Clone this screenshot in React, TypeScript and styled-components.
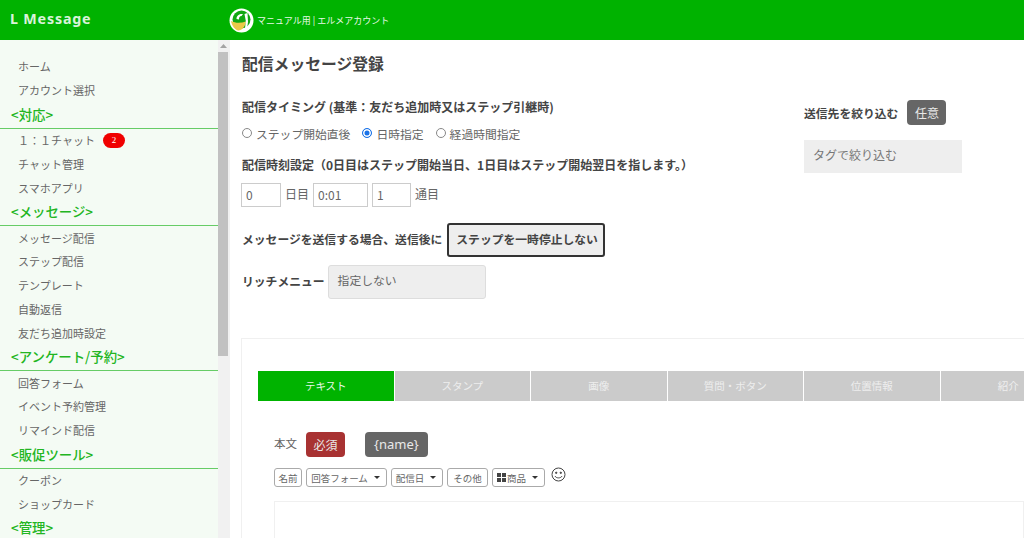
import React from 'react';
import styled, { createGlobalStyle } from 'styled-components';

const GlobalStyle = createGlobalStyle`
  html, body {
    margin: 0;
    height: 100%;
    overflow: hidden;
    background: #fff;
  }
  body, input, button {
    font-family: "Noto Sans CJK JP", "Noto Sans", sans-serif;
    color: #555;
  }
  * {
    box-sizing: border-box;
  }
`;

const Page = styled.div`
  width: 1024px;
  height: 538px;
  display: flex;
  flex-direction: column;
  overflow: hidden;
`;

const Header = styled.header`
  flex: 0 0 40px;
  display: flex;
  align-items: center;
  background: #00b200;
  color: #fff;
`;

const Brand = styled.div`
  width: 229px;
  padding: 0 0 3px 10px;
  font-family: "Noto Sans", sans-serif;
  font-size: 14.3px;
  font-weight: 700;
  letter-spacing: 0.8px;
  opacity: 0.85;
`;

const Account = styled.div`
  display: flex;
  align-items: center;
  gap: 3px;
  font-size: 9px;
  color: #e8f8e8;
`;

const Body = styled.div`
  flex: 1;
  display: flex;
  min-height: 0;
`;

const Sidebar = styled.nav`
  flex: 0 0 218px;
  padding-top: 15px;
  background: #f4fbf4;
  overflow: hidden;
`;

const NavItem = styled.div<{ $indent?: number }>`
  height: 23.75px;
  display: flex;
  align-items: center;
  padding: 0 0 1px ${(p) => p.$indent ?? 18}px;
  font-size: 11px;
  color: #666;
`;

const NavHeading = styled.div`
  height: 26.25px;
  padding: 1px 0 0 11px;
  border-bottom: 1px solid #66cc66;
  font-size: 13.4px;
  line-height: 20px;
  font-weight: 500;
  color: #22b522;
`;

const Badge = styled.span`
  width: 22px;
  height: 15px;
  margin-left: 8px;
  border-radius: 8px;
  background: #f00000;
  color: #fff;
  font-family: "Liberation Serif", serif;
  font-size: 9px;
  line-height: 15px;
  text-align: center;
`;

const Scrollbar = styled.div`
  flex: 0 0 12px;
  display: flex;
  flex-direction: column;
  background: #f1f1f1;
`;

const ScrollArrow = styled.div`
  height: 11px;
  width: 10px;
  display: flex;
  align-items: center;
  justify-content: center;
`;

const ScrollThumb = styled.div`
  width: 10px;
  height: 304px;
  margin-top: 1px;
  background: #c1c1c1;
`;

const Main = styled.main`
  flex: 1;
  min-width: 0;
  padding: 12px 0 0 12px;
  overflow: hidden;
`;

const Title = styled.h1`
  margin: 0 0 22px;
  font-size: 15.8px;
  line-height: 24px;
  font-weight: 700;
  color: #444;
`;

const FormRow = styled.div`
  display: flex;
  height: 215px;
`;

const LeftColumn = styled.div`
  flex: 0 0 562px;
`;

const RightColumn = styled.div`
  flex: 1;
  padding-top: 2px;
`;

const Label = styled.div<{ $lift?: number; $size?: number }>`
  margin-bottom: ${(p) => p.$lift ?? 0}px;
  font-size: ${(p) => p.$size ?? 11.8}px;
  line-height: 18px;
  font-weight: 700;
  color: #444;
  white-space: nowrap;
`;

const RadioRow = styled.div`
  display: flex;
  gap: 12px;
  height: 18px;
  margin: 8px 0 14px;
  font-size: 11.8px;
`;

const RadioLabel = styled.label`
  display: flex;
  align-items: center;
  gap: 4px;
  color: #666;
`;

const RadioDot = styled.span<{ $checked?: boolean }>`
  width: 10px;
  height: 10px;
  border-radius: 50%;
  border: ${(p) => (p.$checked ? '1px solid #1a73e8' : '1px solid #888')};
  background: ${(p) => (p.$checked ? '#1a73e8' : '#fff')};
  box-shadow: ${(p) => (p.$checked ? 'inset 0 0 0 1.5px #fff' : 'none')};
`;

const TimeRow = styled.div`
  display: flex;
  align-items: center;
  gap: 4px;
  margin: 9px 0 0 -1px;
  font-size: 12px;
  color: #666;
`;

const TimeUnit = styled.span`
  margin-bottom: 3px;
`;

const TimeInput = styled.input<{ $width: number }>`
  width: ${(p) => p.$width}px;
  height: 24px;
  padding: 0 4px 2px;
  border: 1px solid #ccc;
  font-size: 12px;
  color: #666;
`;

const StopRow = styled.div`
  display: flex;
  align-items: center;
  gap: 5px;
  margin-top: 16px;
`;

const StopButton = styled.button`
  height: 34px;
  padding: 0 5px 3px 7px;
  border: 2px solid #333;
  border-radius: 3px;
  background: #eee;
  font-size: 11.8px;
  font-weight: 700;
  color: #444;
  white-space: nowrap;
`;

const RichRow = styled.div`
  display: flex;
  align-items: center;
  gap: 3px;
  margin-top: 8px;
`;

const RichSelect = styled.div`
  width: 158px;
  height: 34px;
  padding: 5px 0 0 9px;
  border: 1px solid #ddd;
  border-radius: 3px;
  background: #eee;
  font-size: 11.8px;
  color: #666;
`;

const TagHead = styled.div`
  display: flex;
  align-items: center;
  gap: 9px;
`;

const Pill = styled.span<{ $bg: string; $ml?: number; $latin?: boolean }>`
  display: inline-flex;
  align-items: center;
  justify-content: center;
  height: 25px;
  margin-left: ${(p) => p.$ml ?? 0}px;
  padding: 0 ${(p) => (p.$latin ? 9 : 7.5)}px 1px;
  border-radius: 4px;
  background: ${(p) => p.$bg};
  color: #e8e8e8;
  font-family: ${(p) => (p.$latin ? '"Noto Sans", sans-serif' : 'inherit')};
  font-size: ${(p) => (p.$latin ? 13 : 12)}px;
`;

const TagBox = styled.div`
  width: 158px;
  height: 33px;
  margin-top: 15px;
  padding: 6px 0 0 9px;
  background: #eee;
  font-size: 12px;
  color: #777;
`;

const EditorCard = styled.section`
  height: 220px;
  margin: 25px 0 0 -1px;
  padding: 32px 0 0 16px;
  border: 1px solid #f0f0f0;
  border-right: none;
`;

const Tabs = styled.div`
  display: flex;
  gap: 1px;
`;

const Tab = styled.div<{ $active?: boolean }>`
  flex: 0 0 135.5px;
  height: 30px;
  display: flex;
  align-items: center;
  justify-content: center;
  padding-bottom: 2px;
  font-size: 10.5px;
  background: ${(p) => (p.$active ? '#00b300' : '#cbcbcb')};
  color: ${(p) => (p.$active ? '#e6f8e6' : '#eee')};
`;

const BodyHead = styled.div`
  display: flex;
  align-items: center;
  height: 25px;
  margin: 31px 0 0 16px;
  font-size: 11.5px;
  color: #666;
`;

const BodyLabel = styled.span`
  margin-bottom: 3px;
`;

const Toolbar = styled.div`
  display: flex;
  align-items: flex-start;
  gap: 4px;
  margin: 11px 0 0 16px;
`;

const ToolButton = styled.span<{ $width: number }>`
  display: inline-flex;
  align-items: center;
  justify-content: center;
  gap: 4px;
  width: ${(p) => p.$width}px;
  height: 19px;
  border: 1px solid #aaa;
  border-radius: 3px;
  font-size: 9.5px;
  color: #666;
`;

const Caret = styled.span`
  width: 0;
  height: 0;
  margin: 0 2px;
  border-left: 3px solid transparent;
  border-right: 3px solid transparent;
  border-top: 3px solid #333;
`;

const GridIconWrap = styled.span`
  display: inline-flex;
  margin-right: -3px;
`;

const SmileWrap = styled.span`
  display: inline-flex;
  margin: -1px 0 0 2px;
`;

const TextArea = styled.div`
  height: 60px;
  margin: 14px 0 0 16px;
  border: 1px solid #f0f0f0;
`;

const Logo = () => (
  <svg width="25" height="25" viewBox="0 0 25 25">
    <circle cx="12.5" cy="12.5" r="12" fill="#fff" />
    <circle cx="12.5" cy="11.5" r="9" fill="#12a812" />
    <path d="M2 13 C7 15.5 12 15 17 13.5 C16 19 13 22.5 9.5 22.5 C6 22 3 18 2 13Z" fill="#ecc948" />
    <path d="M7.5 11 C7.5 7 11 5.5 14 6 L12.5 8 C10.5 8 10 9.5 10 11.5Z" fill="#fff" />
    <path d="M15.5 6 L18.5 5 L19 14 L18 21 L16 20.5 L16.8 13Z" fill="#fff" />
  </svg>
);

const Smile = () => (
  <svg width="15" height="15" viewBox="0 0 15 15" fill="none" stroke="#444" strokeWidth="1">
    <circle cx="7.5" cy="7.5" r="6.5" />
    <circle cx="5.2" cy="5.8" r="0.7" fill="#444" />
    <circle cx="9.8" cy="5.8" r="0.7" fill="#444" />
    <path d="M4 9 C5 11.5 10 11.5 11 9" />
  </svg>
);

const GridIcon = () => (
  <svg width="9" height="9" viewBox="0 0 9 9" fill="#444">
    <rect x="0" y="0" width="4" height="4" />
    <rect x="5" y="0" width="4" height="4" />
    <rect x="0" y="5" width="4" height="4" />
    <rect x="5" y="5" width="4" height="4" />
  </svg>
);

// full-width digits, colon and brackets, as the page has them
const CHAT_ITEM = '\uFF11\uFF1A\uFF11チャット';
const TIMING_LABEL = '配信タイミング (基準\uFF1A友だち追加時又はステップ引継時)';
const TIME_LABEL = '配信時刻設定\uFF080日目はステップ開始当日、1日目はステップ開始翌日を指します。\uFF09';

const navGroups = [
  { items: ['ホーム', 'アカウント選択'] },
  { heading: '<対応>', items: [CHAT_ITEM, 'チャット管理', 'スマホアプリ'] },
  { heading: '<メッセージ>', items: ['メッセージ配信', 'ステップ配信', 'テンプレート', '自動返信', '友だち追加時設定'] },
  { heading: '<アンケート/予約>', items: ['回答フォーム', 'イベント予約管理', 'リマインド配信'] },
  { heading: '<販促ツール>', items: ['クーポン', 'ショップカード'] },
  { heading: '<管理>', items: [] },
];

const tabs = ['テキスト', 'スタンプ', '画像', '質問・ボタン', '位置情報', '紹介'];

const App = () => (
  <Page>
    <GlobalStyle />
    <Header>
      <Brand>L Message</Brand>
      <Account>
        <Logo />
        <span>マニュアル用 | エルメアカウント</span>
      </Account>
    </Header>
    <Body>
      <Sidebar>
        {navGroups.map((group, i) => (
          <div key={i}>
            {group.heading && <NavHeading>{group.heading}</NavHeading>}
            {group.items.map((item) =>
              item === CHAT_ITEM ? (
                <NavItem key={item}>
                  {item}
                  <Badge>2</Badge>
                </NavItem>
              ) : (
                <NavItem key={item}>{item}</NavItem>
              ),
            )}
          </div>
        ))}
      </Sidebar>
      <Scrollbar>
        <ScrollArrow>
          <svg width="7" height="4" viewBox="0 0 7 4">
            <path d="M3.5 0 L7 4 H0Z" fill="#a3a3a3" />
          </svg>
        </ScrollArrow>
        <ScrollThumb />
      </Scrollbar>
      <Main>
        <Title>配信メッセージ登録</Title>
        <FormRow>
          <LeftColumn>
            <Label $size={12}>{TIMING_LABEL}</Label>
            <RadioRow>
              <RadioLabel>
                <RadioDot />
                ステップ開始直後
              </RadioLabel>
              <RadioLabel>
                <RadioDot $checked />
                日時指定
              </RadioLabel>
              <RadioLabel>
                <RadioDot />
                経過時間指定
              </RadioLabel>
            </RadioRow>
            <Label $size={12}>{TIME_LABEL}</Label>
            <TimeRow>
              <TimeInput $width={40} defaultValue="0" />
              <TimeUnit>日目</TimeUnit>
              <TimeInput $width={55} defaultValue="0:01" />
              <TimeInput $width={39} defaultValue="1" />
              <TimeUnit>通目</TimeUnit>
            </TimeRow>
            <StopRow>
              <Label $lift={3}>メッセージを送信する場合、送信後に</Label>
              <StopButton>ステップを一時停止しない</StopButton>
            </StopRow>
            <RichRow>
              <Label $lift={2}>リッチメニュー</Label>
              <RichSelect>指定しない</RichSelect>
            </RichRow>
          </LeftColumn>
          <RightColumn>
            <TagHead>
              <Label>送信先を絞り込む</Label>
              <Pill $bg="#666">任意</Pill>
            </TagHead>
            <TagBox>タグで絞り込む</TagBox>
          </RightColumn>
        </FormRow>
        <EditorCard>
          <Tabs>
            {tabs.map((tab, i) => (
              <Tab key={tab} $active={i === 0}>
                {tab}
              </Tab>
            ))}
          </Tabs>
          <BodyHead>
            <BodyLabel>本文</BodyLabel>
            <Pill $bg="#a83232" $ml={9}>必須</Pill>
            <Pill $bg="#666" $ml={20} $latin>{'{name}'}</Pill>
          </BodyHead>
          <Toolbar>
            <ToolButton $width={28}>名前</ToolButton>
            <ToolButton $width={81}>回答フォーム<Caret /></ToolButton>
            <ToolButton $width={52}>配信日<Caret /></ToolButton>
            <ToolButton $width={41}>その他</ToolButton>
            <ToolButton $width={53}>
              <GridIconWrap><GridIcon /></GridIconWrap>
              商品
              <Caret />
            </ToolButton>
            <SmileWrap><Smile /></SmileWrap>
          </Toolbar>
          <TextArea />
        </EditorCard>
      </Main>
    </Body>
  </Page>
);

export default App;
